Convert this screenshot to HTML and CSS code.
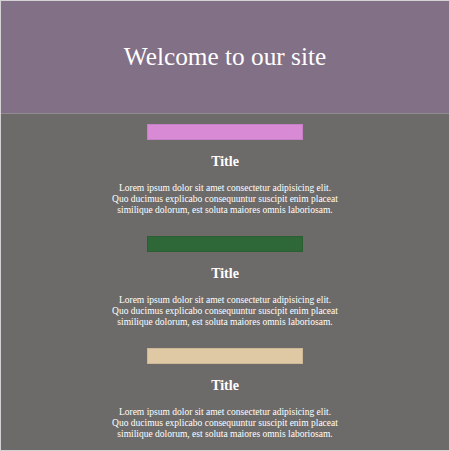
FILE: index.html
```html
<!DOCTYPE html>
<html>
<head>
<meta charset="utf-8">
<link rel="stylesheet" href="styles.css">
</head>
<body>
<div class="frame">
  <header class="hero">
    <h1 class="hero-title">Welcome to our site</h1>
  </header>
  <main class="content">
    <section class="card">
      <div class="swatch swatch-pink"></div>
      <h2 class="card-title">Title</h2>
      <p class="card-text">Lorem ipsum dolor sit amet consectetur adipisicing elit.<br>Quo ducimus explicabo consequuntur suscipit enim placeat<br>similique dolorum, est soluta maiores omnis laboriosam.</p>
    </section>
    <section class="card">
      <div class="swatch swatch-green"></div>
      <h2 class="card-title">Title</h2>
      <p class="card-text">Lorem ipsum dolor sit amet consectetur adipisicing elit.<br>Quo ducimus explicabo consequuntur suscipit enim placeat<br>similique dolorum, est soluta maiores omnis laboriosam.</p>
    </section>
    <section class="card">
      <div class="swatch swatch-tan"></div>
      <h2 class="card-title">Title</h2>
      <p class="card-text">Lorem ipsum dolor sit amet consectetur adipisicing elit.<br>Quo ducimus explicabo consequuntur suscipit enim placeat<br>similique dolorum, est soluta maiores omnis laboriosam.</p>
    </section>
  </main>
</div>
</body>
</html>
```
FILE: styles.css
```css
* { box-sizing: border-box; }
html, body { margin: 0; padding: 0; }
body {
  font-family: "Liberation Serif", "Times New Roman", serif;
  color: #ffffff;
  background: #d4d4d4;
}
.frame {
  width: 450px;
  height: 451px;
  border: 1px solid #d4d2d4;
  overflow: hidden;
  display: flex;
  flex-direction: column;
}
.hero {
  height: 113px;
  background: #827087;
  border-bottom: 1px solid #928b94;
  display: flex;
  align-items: center;
  justify-content: center;
  flex-shrink: 0;
}
.hero-title {
  margin: 0;
  font-weight: normal;
  font-size: 25.3px;
  line-height: 1;
}
.content {
  flex: 1;
  background: #6d6b69;
  padding-top: 10px;
}
.card {
  display: flex;
  flex-direction: column;
  align-items: center;
  height: 112px;
}
.swatch {
  width: 156px;
  height: 16px;
  border: 1px solid rgba(0,0,0,0.08);
}
.swatch-pink { background: #d88bd4; }
.swatch-green { background: #2f6838; }
.swatch-tan { background: #dfc9a5; }
.card-title {
  margin: 13px 0 0;
  font-size: 14px;
  line-height: 18px;
  font-weight: bold;
}
.card-text {
  margin: 12px 0 0;
  font-size: 9.5px;
  line-height: 11px;
  text-align: center;
}
```
